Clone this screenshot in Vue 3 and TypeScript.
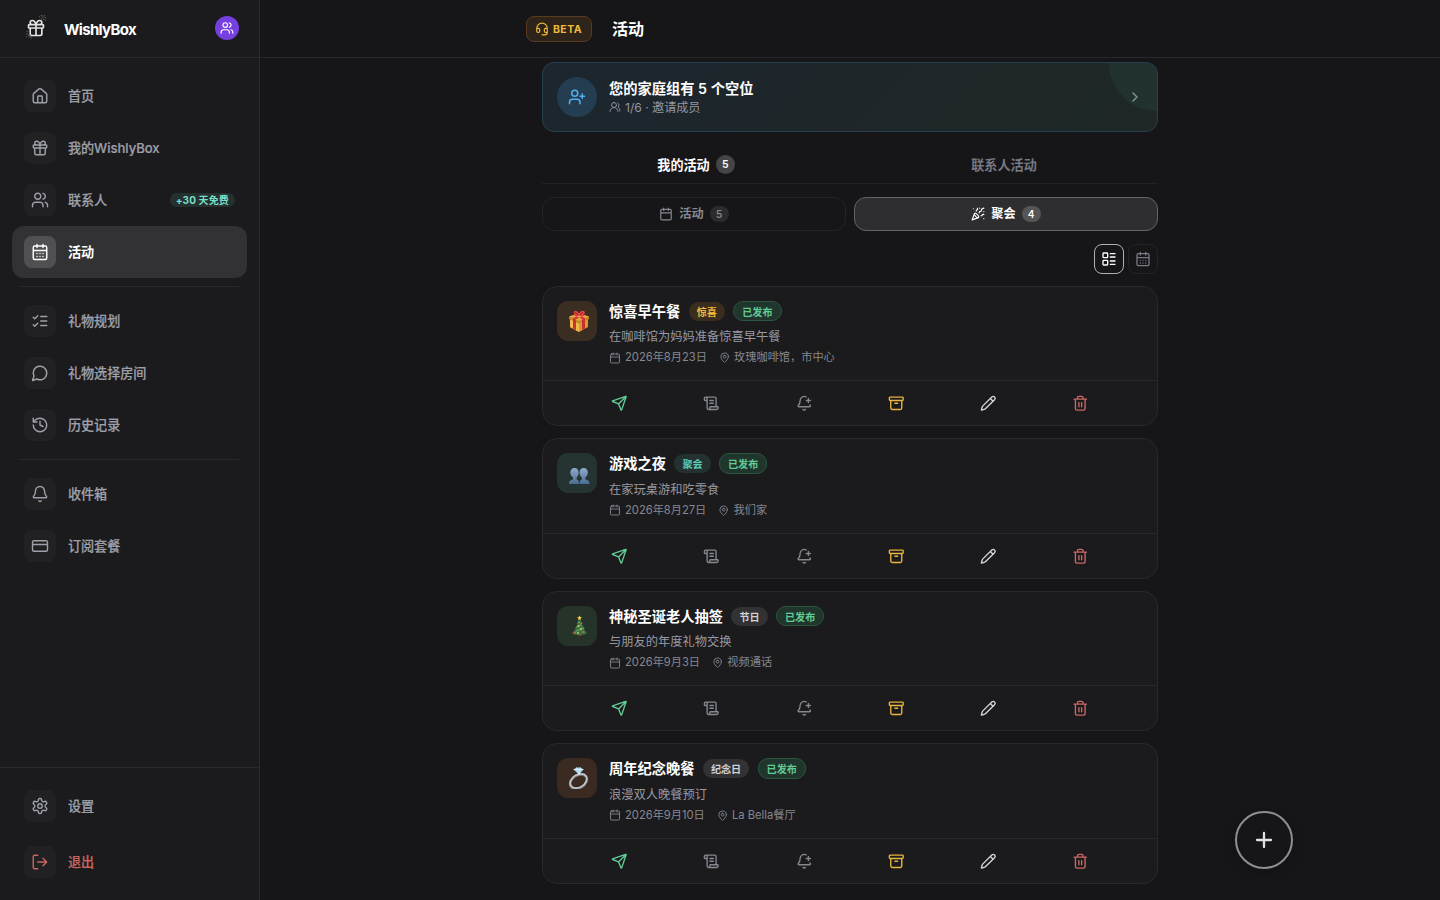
<script setup lang="ts">
import { h, type FunctionalComponent } from 'vue'

const paths: Record<string, string> = {
  home: 'M15 21v-8a1 1 0 0 0-1-1h-4a1 1 0 0 0-1 1v8M3 10a2 2 0 0 1 .709-1.528l7-5.999a2 2 0 0 1 2.582 0l7 5.999A2 2 0 0 1 21 10v9a2 2 0 0 1-2 2H5a2 2 0 0 1-2-2z',
  gift: 'M4 8h16a1 1 0 0 1 1 1v2a1 1 0 0 1-1 1H4a1 1 0 0 1-1-1V9a1 1 0 0 1 1-1zM12 8v13M19 12v7a2 2 0 0 1-2 2H7a2 2 0 0 1-2-2v-7M7.5 8a2.5 2.5 0 0 1 0-5A4.8 8 0 0 1 12 8a4.8 8 0 0 1 4.5-5 2.5 2.5 0 0 1 0 5',
  users: 'M18 21a8 8 0 0 0-16 0M10 3a5 5 0 1 0 0 10 5 5 0 0 0 0-10zM22 20c0-3.37-2-6.5-4-8a5 5 0 0 0-.45-8.3',
  usersWide: 'M16 21v-2a4 4 0 0 0-4-4H6a4 4 0 0 0-4 4v2M9 3a4 4 0 1 0 0 8 4 4 0 0 0 0-8zM22 21v-2a4 4 0 0 0-3-3.87M16 3.13a4 4 0 0 1 0 7.75',
  userAdd: 'M16 21v-2a4 4 0 0 0-4-4H6a4 4 0 0 0-4 4v2M9 3a4 4 0 1 0 0 8 4 4 0 0 0 0-8zM19 8v6M22 11h-6',
  calendarDays: 'M8 2v4M16 2v4M5 4h14a2 2 0 0 1 2 2v14a2 2 0 0 1-2 2H5a2 2 0 0 1-2-2V6a2 2 0 0 1 2-2zM3 10h18M8 14h.01M12 14h.01M16 14h.01M8 18h.01M12 18h.01M16 18h.01',
  calendar: 'M8 2v4M16 2v4M5 4h14a2 2 0 0 1 2 2v14a2 2 0 0 1-2 2H5a2 2 0 0 1-2-2V6a2 2 0 0 1 2-2zM3 10h18',
  checks: 'm3 17 2 2 4-4M3 7l2 2 4-4M13 6h8M13 12h8M13 18h8',
  message: 'M7.9 20A9 9 0 1 0 4 16.1L2 22z',
  history: 'M3 12a9 9 0 1 0 9-9 9.75 9.75 0 0 0-6.74 2.74L3 8M3 3v5h5M12 7v5l4 2',
  bell: 'M10.268 21a2 2 0 0 0 3.464 0M3.262 15.326A1 1 0 0 0 4 17h16a1 1 0 0 0 .74-1.673C19.41 13.956 18 12.499 18 8A6 6 0 0 0 6 8c0 4.499-1.411 5.956-2.738 7.326',
  card: 'M4 5h16a2 2 0 0 1 2 2v10a2 2 0 0 1-2 2H4a2 2 0 0 1-2-2V7a2 2 0 0 1 2-2zM2 10h20',
  settings: 'M12.22 2h-.44a2 2 0 0 0-2 2v.18a2 2 0 0 1-1 1.73l-.43.25a2 2 0 0 1-2 0l-.15-.08a2 2 0 0 0-2.73.73l-.22.38a2 2 0 0 0 .73 2.73l.15.1a2 2 0 0 1 1 1.72v.51a2 2 0 0 1-1 1.74l-.15.09a2 2 0 0 0-.73 2.73l.22.38a2 2 0 0 0 2.73.73l.15-.08a2 2 0 0 1 2 0l.43.25a2 2 0 0 1 1 1.73V20a2 2 0 0 0 2 2h.44a2 2 0 0 0 2-2v-.18a2 2 0 0 1 1-1.73l.43-.25a2 2 0 0 1 2 0l.15.08a2 2 0 0 0 2.73-.73l.22-.39a2 2 0 0 0-.73-2.73l-.15-.08a2 2 0 0 1-1-1.74v-.5a2 2 0 0 1 1-1.74l.15-.09a2 2 0 0 0 .73-2.73l-.22-.38a2 2 0 0 0-2.73-.73l-.15.08a2 2 0 0 1-2 0l-.43-.25a2 2 0 0 1-1-1.73V4a2 2 0 0 0-2-2zM12 9a3 3 0 1 0 0 6 3 3 0 0 0 0-6z',
  logout: 'M9 21H5a2 2 0 0 1-2-2V5a2 2 0 0 1 2-2h4M16 17l5-5-5-5M21 12H9',
  headset: 'M3 11h3a2 2 0 0 1 2 2v3a2 2 0 0 1-2 2H5a2 2 0 0 1-2-2v-5a9 9 0 0 1 18 0v5a2 2 0 0 1-2 2h-1a2 2 0 0 1-2-2v-3a2 2 0 0 1 2-2h3M21 16v2a4 4 0 0 1-4 4h-5',
  chevron: 'm9 18 6-6-6-6',
  party: 'M5.8 11.3 2 22l10.7-3.79M4 3h.01M22 8h.01M15 2h.01M22 20h.01M22 2l-2.24.75a2.9 2.9 0 0 0-1.96 3.12c.1.86-.57 1.63-1.45 1.63h-.38c-.86 0-1.6.6-1.76 1.44L14 10M22 13l-.82-.33c-.86-.34-1.82.2-1.98 1.11c-.11.7-.72 1.22-1.43 1.22H17M11 2l.33.82c.34.86-.2 1.82-1.11 1.98C9.52 4.9 9 5.52 9 6.23V7M11 13c1.93 1.93 2.83 4.17 2 5-.83.83-3.07-.07-5-2-1.93-1.93-2.83-4.17-2-5 .83-.83 3.07.07 5 2Z',
  list: 'M4 3h5a1 1 0 0 1 1 1v5a1 1 0 0 1-1 1H4a1 1 0 0 1-1-1V4a1 1 0 0 1 1-1zM4 14h5a1 1 0 0 1 1 1v5a1 1 0 0 1-1 1H4a1 1 0 0 1-1-1v-5a1 1 0 0 1 1-1zM14 4h7M14 9h7M14 15h7M14 20h7',
  pin: 'M20 10c0 4.993-5.539 10.193-7.399 11.799a1 1 0 0 1-1.202 0C9.539 20.193 4 14.993 4 10a8 8 0 0 1 16 0zM12 7a3 3 0 1 0 0 6 3 3 0 0 0 0-6z',
  send: 'M14.536 21.686a.5.5 0 0 0 .937-.024l6.5-19a.496.496 0 0 0-.635-.635l-19 6.5a.5.5 0 0 0-.024.937l7.93 3.18a2 2 0 0 1 1.112 1.11zM21.854 2.147l-10.94 10.939',
  scroll: 'M15 12h-5M15 8h-5M19 17V5a2 2 0 0 0-2-2H4M8 21h12a2 2 0 0 0 2-2v-1a1 1 0 0 0-1-1H11a1 1 0 0 0-1 1v1a2 2 0 1 1-4 0V5a2 2 0 1 0-4 0v2a1 1 0 0 0 1 1h3',
  bellPlus: 'M10.268 21a2 2 0 0 0 3.464 0M15 8h6M18 5v6M20.002 14.464a9 9 0 0 0 .738.863A1 1 0 0 1 20 17H4a1 1 0 0 1-.74-1.673C4.59 13.956 6 12.499 6 8a6 6 0 0 1 8.75-5.332',
  archive: 'M3 3h18a1 1 0 0 1 1 1v3a1 1 0 0 1-1 1H3a1 1 0 0 1-1-1V4a1 1 0 0 1 1-1zM4 8v11a2 2 0 0 0 2 2h12a2 2 0 0 0 2-2V8M10 12h4',
  pencil: 'M21.174 6.812a1 1 0 0 0-3.986-3.987L3.842 16.174a2 2 0 0 0-.5.83l-1.321 4.352a.5.5 0 0 0 .623.622l4.353-1.32a2 2 0 0 0 .83-.497zM15 5l4 4',
  trash: 'M3 6h18M19 6v14c0 1-1 2-2 2H7c-1 0-2-1-2-2V6M8 6V4c0-1 1-2 2-2h4c1 0 2 1 2 2v2M10 11v6M14 11v6',
  plus: 'M5 12h14M12 5v14',
}

const Icon: FunctionalComponent<{ name: string; size: number; weight?: number }> = (p) =>
  h('svg', {
    width: p.size, height: p.size, viewBox: '0 0 24 24', fill: 'none', stroke: 'currentColor',
    'stroke-width': p.weight ?? 2, 'stroke-linecap': 'round', 'stroke-linejoin': 'round',
    style: { display: 'block', flex: 'none' },
  }, [h('path', { d: paths[p.name] })])
Icon.props = ['name', 'size', 'weight']

interface NavItem { icon: string; label: string; badge?: string; active?: boolean }
const groups: NavItem[][] = [
  [
    { icon: 'home', label: '首页' },
    { icon: 'gift', label: '我的WishlyBox' },
    { icon: 'usersWide', label: '联系人', badge: '+30 天免费' },
    { icon: 'calendarDays', label: '活动', active: true },
  ],
  [
    { icon: 'checks', label: '礼物规划' },
    { icon: 'message', label: '礼物选择房间' },
    { icon: 'history', label: '历史记录' },
  ],
  [
    { icon: 'bell', label: '收件箱' },
    { icon: 'card', label: '订阅套餐' },
  ],
]

interface EventItem { art: string; title: string; tag: string; tone: string; desc: string; date: string; place: string }
const events: EventItem[] = [
  { art: 'present', title: '惊喜早午餐', tag: '惊喜', tone: 'amber', desc: '在咖啡馆为妈妈准备惊喜早午餐', date: '2026年8月23日', place: '玫瑰咖啡馆，市中心' },
  { art: 'people', title: '游戏之夜', tag: '聚会', tone: 'teal', desc: '在家玩桌游和吃零食', date: '2026年8月27日', place: '我们家' },
  { art: 'tree', title: '神秘圣诞老人抽签', tag: '节日', tone: 'gray', desc: '与朋友的年度礼物交换', date: '2026年9月3日', place: '视频通话' },
  { art: 'ring', title: '周年纪念晚餐', tag: '纪念日', tone: 'gray', desc: '浪漫双人晚餐预订', date: '2026年9月10日', place: 'La Bella餐厅' },
]
const actions = ['send', 'scroll', 'bellPlus', 'archive', 'pencil', 'trash']
</script>

<template>
  <div class="app">
    <aside class="sidebar">
      <div class="brand">
        <span class="logo">
          <svg class="sparkle" width="24" height="26" viewBox="0 0 24 26" fill="none" stroke="#5c5c5f" stroke-width="1.1" stroke-dasharray="1 1.4">
            <path d="M14 3c3-2 5-1 7 1M16 5c2-1 4 0 5 3M16 1l4 6M19 1l2 5M2 17c0 3 2 5 5 6M1 20c2 1 4 2 6 5M4 16l1 8M1 23l5-2" />
          </svg>
          <Icon name="gift" :size="20" />
        </span>
        <span class="brand-name">WishlyBox</span>
        <span class="avatar"><Icon name="usersWide" :size="14" /></span>
      </div>
      <nav class="nav">
        <div v-for="(group, i) in groups" :key="i" class="group">
          <div v-for="item in group" :key="item.label" class="item" :class="{ active: item.active }">
            <span class="tile"><Icon :name="item.icon" :size="18" :weight="1.9" /></span>
            <span class="label">{{ item.label }}</span>
            <span v-if="item.badge" class="free">{{ item.badge }}</span>
          </div>
        </div>
      </nav>
      <div class="foot">
        <div class="item"><span class="tile"><Icon name="settings" :size="18" :weight="1.9" /></span><span class="label">设置</span></div>
        <div class="item danger"><span class="tile"><Icon name="logout" :size="18" :weight="1.9" /></span><span class="label">退出</span></div>
      </div>
    </aside>

    <main class="main">
      <header class="top">
        <div class="top-inner">
          <span class="beta"><Icon name="headset" :size="14" /><span class="beta-text">BETA</span></span>
          <h1>活动</h1>
        </div>
      </header>

      <div class="content">
        <section class="banner">
          <span class="invite"><Icon name="userAdd" :size="18" /></span>
          <div class="banner-text">
            <div class="banner-title">您的家庭组有 5 个空位</div>
            <div class="banner-sub"><Icon name="users" :size="12" :weight="1.8" />1/6 · 邀请成员</div>
          </div>
          <span class="go"><Icon name="chevron" :size="16" /></span>
        </section>

        <div class="tabs">
          <div class="tab on">我的活动<span class="count">5</span></div>
          <div class="tab">联系人活动</div>
        </div>

        <div class="segments">
          <div class="segment"><Icon name="calendar" :size="14" /><span class="segment-text">活动</span><span class="pill">5</span></div>
          <div class="segment on"><Icon name="party" :size="14" /><span class="segment-text">聚会</span><span class="pill">4</span></div>
        </div>

        <div class="views">
          <span class="view on"><Icon name="list" :size="16" /></span>
          <span class="view"><Icon name="calendarDays" :size="16" /></span>
        </div>

        <div class="cards">
          <article v-for="e in events" :key="e.title" class="card">
            <div class="body">
              <div class="art" :class="e.art">
                <svg v-if="e.art === 'present'" width="22" height="22" viewBox="0 0 22 22">
                  <path d="M2 8l9-3 9 3v9l-9 5-9-5z" fill="#d99b2f" />
                  <path d="M2 8l9 3.5V22l-9-5z" fill="#efb84a" />
                  <path d="M1 6.5L11 3l10 3.5L11 11z" fill="#e7ad43" />
                  <path d="M1 6.5L11 11v2.5L1 9zM21 6.5L11 11v2.5L21 9z" fill="#c6862a" />
                  <path d="M5 8.3l3 1.3V20l-3-1.5zM14 9.6l3-1.3v10.2L14 20z" fill="#cd3030" />
                  <path d="M4.5 8l10-4 3 1-10 4.5zM17.5 8l-10-4-2 1 9.5 4.5z" fill="#dd3b3a" />
                  <path d="M11 6C7 6 5 3 6 1.500S10 1 11 4c1-3 4-4 5.500-2.500S15 6 11 6z" fill="#e74340" />
                  <path d="M7 2.500l3 2M15 2.500l-3 2" stroke="#951f26" />
                </svg>
                <svg v-else-if="e.art === 'people'" width="22" height="22" viewBox="0 0 22 22">
                  <defs><linearGradient id="silhouette" x1="0" y1="0" x2="0" y2="1"><stop stop-color="#8eaccb" /><stop offset="1" stop-color="#4b6b91" /></linearGradient></defs>
                  <g fill="url(#silhouette)">
                    <path d="M1 19c0-3 1-3.500 4-4.500v-2C3.500 11.500 2.300 9.500 2.300 7.500c0-2.500 1.700-4.500 4.200-4.500s4.200 2 4.200 4.500c0 2-1 4-2 5v2c1.800.5 2.300 2 2.300 4.500z" />
                    <path d="M11.500 19c0-2.500.2-3.700 2.300-4.500v-2c-1.300-1-2.300-3-2.300-5C11.500 5 13.200 3 15.700 3s4.200 2 4.200 4.500c0 2-1.200 4-2.500 5v2c3 1 4.100 1.500 4.100 4.500z" />
                  </g>
                </svg>
                <svg v-else-if="e.art === 'tree'" width="22" height="22" viewBox="0 0 22 22">
                  <path d="M10 18h3v3h-3z" fill="#7a3f27" />
                  <path d="M11.500 3L8.500 9h1.300L6.500 13.500H8L4 18.500c4 2 10 2 15 0l-3.500-5H17L13.500 9h1z" fill="#387448" />
                  <path d="M8 16l8-3M8.500 12l5-2M10 8l2-1" stroke="#6fa35b" />
                  <path d="M11.500.5l.8 1.500 1.700.2-1.300 1.200.3 1.700-1.500-.8-1.500.8.3-1.700L9 2.200l1.700-.2z" fill="#f0c844" />
                  <g fill="#db6247"><circle cx="7" cy="17.500" r="1" /><circle cx="13.500" cy="8.500" r=".9" /><circle cx="15" cy="17" r="1" /></g>
                  <g fill="#e2c85d"><circle cx="10.500" cy="11" r=".9" /><circle cx="13" cy="14" r=".9" /><circle cx="10" cy="18" r=".9" /></g>
                </svg>
                <svg v-else width="22" height="22" viewBox="0 0 22 22">
                  <ellipse cx="10.500" cy="14.500" rx="9" ry="6.300" transform="rotate(-32 10.500 14.500)" fill="none" stroke="#74767a" stroke-width="2.600" />
                  <ellipse cx="10.500" cy="14" rx="9" ry="6.300" transform="rotate(-32 10.500 14)" fill="none" stroke="#c4c5c8" stroke-width="1.600" />
                  <path d="M5.500 2.500l3-2h4l3 2-4.500 5z" fill="#a4d1ed" />
                  <path d="M5.500 2.500h10M8.500.5L11 7.500l1.500-7" stroke="#e5f5fc" stroke-width=".7" fill="none" />
                </svg>
              </div>
              <div class="info">
                <div class="title-row">
                  <span class="title">{{ e.title }}</span>
                  <span class="tag" :class="e.tone">{{ e.tag }}</span>
                  <span class="tag live">已发布</span>
                </div>
                <div class="desc">{{ e.desc }}</div>
                <div class="meta">
                  <span><Icon name="calendar" :size="12" :weight="1.8" />{{ e.date }}</span>
                  <span><Icon name="pin" :size="11.250" :weight="1.9" />{{ e.place }}</span>
                </div>
              </div>
            </div>
            <div class="actions">
              <span v-for="a in actions" :key="a" class="action" :class="a"><Icon :name="a" :size="16.500" :weight="2" /></span>
            </div>
          </article>
        </div>
      </div>
      <span class="fab"><Icon name="plus" :size="24" :weight="2.3" /></span>
    </main>
  </div>
</template>

<style>
body { background: #161618; overflow: hidden; }
</style>

<style scoped>
* { box-sizing: border-box; }
.app {
  display: flex; width: 1440px; height: 900px; background: #161618; color: #fff;
  font-family: Inter, "Noto Sans CJK SC", sans-serif; font-size: 13.125px; overflow: hidden;
}
.sidebar { width: 260px; flex: none; display: flex; flex-direction: column; background: #1b1b1d; border-right: 1px solid #2a2a2c; }
.brand { height: 58px; flex: none; display: flex; align-items: center; padding: 0 20px 1px 24px; border-bottom: 1px solid #2a2a2c; }
.logo { position: relative; width: 24px; height: 24px; display: grid; place-items: center; color: #e4e4e4; }
.sparkle { position: absolute; left: 1px; top: -2px; }
.brand-name { margin-left: 16px; padding-top: 3px; font-size: 15px; font-weight: 700; letter-spacing: -0.700px; }
.avatar { margin-left: auto; width: 24px; height: 24px; border-radius: 50%; background: #763fe0; display: grid; place-items: center; }
.nav { flex: 1; padding: 12px 12px 0; }
.group + .group { position: relative; padding-top: 17px; }
.group + .group::before { content: ""; position: absolute; top: 8px; left: 8px; right: 8px; height: 1px; background: #2a2a2c; }
.item { display: flex; align-items: center; gap: 12px; height: 52px; padding: 0 12px; border-radius: 12px; color: #9d9fa9; font-weight: 500; }
.item.active { background: #323234; color: #fff; font-weight: 600; }
.item.danger { color: #c96560; }
.label { padding-bottom: 1.500px; -webkit-text-stroke: 0.2px; letter-spacing: -0.050px; }
.active .label { -webkit-text-stroke: 0; }
.tile { width: 32px; height: 32px; border-radius: 8px; background: #212123; display: grid; place-items: center; }
.active .tile { background: #505052; }
.free { margin-left: auto; padding: 0 6px; height: 14px; line-height: 14px; border-radius: 8px; background: #24312f; color: #78dfc9; font-size: 10px; font-weight: 700; letter-spacing: 0.150px; }
.foot { padding: 12px; display: grid; gap: 4px; border-top: 1px solid #2a2a2c; }

.main { flex: 1; position: relative; display: flex; flex-direction: column; }
.top { height: 58px; flex: none; border-bottom: 1px solid #29292b; }
.top-inner { width: 648px; height: 57px; margin: 0 auto; display: flex; align-items: center; gap: 20px; }
.beta { display: flex; align-items: center; justify-content: center; gap: 4px; width: 66px; height: 26px; border: 1px solid #5a3b20; border-radius: 8px; background: #2e241a; color: #f0ba3a; font-size: 10.5px; font-weight: 700; letter-spacing: 0.45px; padding-right: 1px; }
.beta-text { padding-top: 1px; }
h1 { margin: 0; padding-bottom: 2px; font-size: 16px; font-weight: 700; }
.content { width: 616px; margin: 4px auto 0; }
.banner { position: relative; height: 70px; display: flex; align-items: center; gap: 12px; padding: 0 14px; border: 1px solid #25404f; border-radius: 12px; background: linear-gradient(135deg, #1c262f, #1e2629 50%, #1f2827); overflow: hidden; }
.banner::after { content: ""; position: absolute; width: 96px; height: 96px; right: -48px; top: -48px; border-radius: 50%; background: rgba(70, 180, 155, 0.07); }
.invite { width: 40px; height: 40px; border-radius: 50%; background: #243d50; color: #53b0ef; display: grid; place-items: center; }
.banner-title { font-size: 14.25px; font-weight: 600; line-height: 20px; }
.banner-sub { display: flex; align-items: center; gap: 4px; font-size: 12.100px; line-height: 17px; color: #9597a1; }
.go { margin-left: auto; color: #8d9397; z-index: 1; }
.tabs { display: grid; grid-template-columns: 1fr 1fr; height: 40px; margin-top: 12px; border-bottom: 1px solid #222224; }
.tab { display: flex; align-items: center; justify-content: center; gap: 6px; padding-top: 1px; color: #777983; font-weight: 600; }
.tab.on { color: #fff; }
.count { width: 19px; height: 19px; border-radius: 50%; display: grid; place-items: center; background: #454547; font-size: 10.5px; }
.segments { display: grid; grid-template-columns: 1fr 1fr; gap: 8px; margin-top: 12.500px; }
.segment { height: 34.500px; display: flex; align-items: center; justify-content: center; gap: 6px; border: 1px solid #242426; border-radius: 12px; color: #858791; font-size: 12.190px; font-weight: 600; }
.segment-text { padding-bottom: 1px; }
.segment.on { background: #2e2e30; border-color: #646466; color: #fff; }
.pill { width: 19px; height: 16px; border-radius: 9px; display: grid; place-items: center; background: #2b2b2d; font-size: 10px; }
.segment.on .pill { background: #555557; }
.views { display: flex; justify-content: flex-end; gap: 4px; margin-top: 12.500px; }
.view { width: 30px; height: 30px; display: grid; place-items: center; border: 1px solid #242426; border-radius: 8px; color: #777983; }
.view.on { border-color: #b0b0b2; color: #fff; }
.cards { display: grid; gap: 12px; margin-top: 12.400px; }
.card { height: 140.500px; border: 1px solid #29292b; border-radius: 15px; background: #1b1b1d; overflow: hidden; display: flex; flex-direction: column; }
.body { height: 93.500px; display: flex; gap: 12px; padding: 14px; }
.art { width: 40px; height: 40px; flex: none; border-radius: 11px; display: grid; place-items: center; padding: 0 0 0 3px; }
.art.present { background: #3a2e22; }
.art.people { background: #253332; padding-top: 5px; }
.art.tree { background: #253329; }
.art.ring { background: #3a2a22; }
.title-row { display: flex; align-items: center; gap: 8.400px; height: 20.500px; }
.title { padding-bottom: 2px; font-size: 14.250px; font-weight: 600; white-space: nowrap; }
.tag { height: 19px; display: flex; align-items: center; padding: 0 8px; border-radius: 10px; font-size: 10.100px; font-weight: 600; white-space: nowrap; }
.amber { background: #3b2d1e; color: #efba40; }
.teal { background: #233230; color: #5bc9b6; }
.gray { background: #323234; color: #d1d1d3; }
.live { height: 20.500px; border: 1px solid #2a5642; background: #20352c; color: #61cb95; }
.desc { margin-top: 6.800px; font-size: 12.250px; line-height: 18.250px; color: #9799a3; }
.meta { display: flex; gap: 12px; margin-top: 3px; font-size: 11.200px; line-height: 17px; color: #858791; }
.meta span { display: flex; align-items: center; gap: 4px; }
.actions { flex: 1; display: flex; align-items: center; justify-content: space-evenly; border-top: 1px solid #29292b; }
.action { width: 31.500px; display: grid; place-items: center; color: #85878f; }
.action.send { color: #61cb95; }
.action.archive { color: #e9b33e; }
.action.pencil { color: #d3d3d5; }
.action.trash { color: #cc6765; }
.fab { position: absolute; left: 975px; top: 811px; width: 58px; height: 58px; border: 2px solid #8f8f91; border-radius: 50%; background: #161618; color: #e1e1e1; display: grid; place-items: center; box-shadow: 0 4px 14px rgba(0, 0, 0, 0.2); }
</style>
